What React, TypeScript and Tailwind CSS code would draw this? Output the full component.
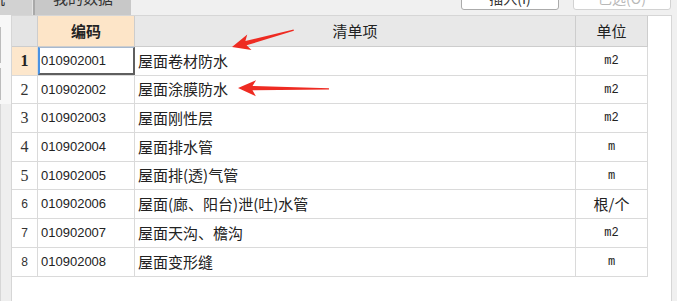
import React from "react";

type Row = {
  no: string;
  code: string;
  name: string;
  unit: string;
  h: string;
  noFont: string;
  unitFont: string;
};

const rows: Row[] = [
  { no: "1", code: "010902001", name: "屋面卷材防水", unit: "m2", h: "h-[29px]", noFont: "font-['Liberation_Serif',serif] text-[16px] font-bold", unitFont: "font-['Liberation_Mono',monospace] text-[12px]" },
  { no: "2", code: "010902002", name: "屋面涂膜防水", unit: "m2", h: "h-[28px]", noFont: "font-['Liberation_Serif',serif] text-[16px]", unitFont: "font-['Liberation_Mono',monospace] text-[12px]" },
  { no: "3", code: "010902003", name: "屋面刚性层", unit: "m2", h: "h-[29px]", noFont: "font-['Liberation_Serif',serif] text-[16px]", unitFont: "font-['Liberation_Mono',monospace] text-[12px]" },
  { no: "4", code: "010902004", name: "屋面排水管", unit: "m", h: "h-[29px]", noFont: "font-['Liberation_Serif',serif] text-[16px]", unitFont: "font-['Liberation_Mono',monospace] text-[12px]" },
  { no: "5", code: "010902005", name: "屋面排(透)气管", unit: "m", h: "h-[28px]", noFont: "font-['Liberation_Serif',serif] text-[16px]", unitFont: "font-['Liberation_Mono',monospace] text-[12px]" },
  { no: "6", code: "010902006", name: "屋面(廊、阳台)泄(吐)水管", unit: "根/个", h: "h-[29px]", noFont: "font-['Liberation_Sans',sans-serif] text-[12px]", unitFont: "font-['Noto_Sans_CJK_SC',sans-serif] text-[15px]" },
  { no: "7", code: "010902007", name: "屋面天沟、檐沟", unit: "m2", h: "h-[29px]", noFont: "font-['Liberation_Sans',sans-serif] text-[12px]", unitFont: "font-['Liberation_Mono',monospace] text-[12px]" },
  { no: "8", code: "010902008", name: "屋面变形缝", unit: "m", h: "h-[29px]", noFont: "font-['Liberation_Sans',sans-serif] text-[12px]", unitFont: "font-['Liberation_Mono',monospace] text-[12px]" },
];

// red callout arrow: tip at (x, y), tail runs `len` px along `angle`
const Arrow = ({ x, y, len, angle }: { x: number; y: number; len: number; angle: number }) => {
  const pts = `0,0 18,-8 14.5,-2.2 ${len},-0.6 ${len},0.6 14.5,2.2 18,8`;
  return <polygon points={pts} transform={`translate(${x} ${y}) rotate(${angle})`} fill="#ee2b22" />;
};

const ToolButton = ({ label, disabled }: { label: string; disabled?: boolean }) => {
  return (
    <div className="w-[98px] h-[10px] overflow-hidden">
      <div
        className={
          disabled
            ? "h-[24px] -mt-[14px] flex items-center justify-center rounded-[3px] border border-[#d2d2d2] bg-white text-[14px] text-[#b8b8b8]"
            : "h-[24px] -mt-[14px] flex items-center justify-center rounded-[3px] border border-[#ababab] bg-white text-[14px] text-[#333]"
        }
      >
        {label}
      </div>
    </div>
  );
};

const App = () => {
  return (
    <div className="relative w-[677px] h-[301px] overflow-hidden bg-[#f0f0f0] text-[#222] font-['Noto_Sans_CJK_SC',sans-serif]">
      {/* tabs + toolbar */}
      <div className="flex h-[15px]">
        <div className="w-[32px] h-full bg-[#d2d2d2] overflow-hidden">
          <span className="block -ml-[10px] -mt-[10px] text-[15px] leading-[16px] text-[#333]">机</span>
        </div>
        <div className="w-[1px] h-full bg-[#e4e4e4]" />
        <div className="w-[2px] h-full bg-[#a9a9a9]" />
        <div className="w-[96px] h-full bg-[#c8c8c8] overflow-hidden">
          <span className="block -mt-[10px] text-center text-[15px] leading-[16px] text-[#333]">我的数据</span>
        </div>
        <div className="w-[330px]" />
        <ToolButton label="插入(I)" />
        <div className="w-[14px]" />
        <ToolButton label="已选(O)" disabled />
      </div>

      <div className="flex h-[286px]">
        {/* edge of the neighbouring panel */}
        <div className="w-[11px] h-full bg-[#f7f7f7] flex flex-col">
          <div className="mt-[12px] h-[36px] border-l border-[#bcbcbc]" />
          <div className="mt-[5px] h-[32px] border-l border-[#bcbcbc]" />
          <div className="mt-[4px] flex-1 border-l border-[#d6d6d6] bg-[#eeeeee]" />
        </div>

        <div className="w-[661px] h-full bg-white border-t border-l border-r border-[#d6d6d6]">
          <div className="w-[636px]">
            {/* header */}
            <div className="flex h-[31px] border-b border-[#cdcdcd] text-[15px]">
              <div className="w-[26px] h-full bg-[#e4e4e4] border-r border-[#cdcdcd]" />
              <div className="w-[97px] h-full bg-[#fde5c8] border-r border-[#cdcdcd] flex items-center justify-center font-bold">
                编码
              </div>
              <div className="w-[441px] h-full bg-[#e8e8e8] border-r border-[#cdcdcd] flex items-center justify-center">
                清单项
              </div>
              <div className="w-[72px] h-full bg-[#e8e8e8] border-r border-[#cdcdcd] flex items-center justify-center">
                单位
              </div>
            </div>

            {rows.map((r, i) => (
              <div key={r.code} className={`flex border-b border-[#dadada] ${r.h}`}>
                <div
                  className={
                    i === 0
                      ? `w-[26px] h-full bg-[#fde7cc] border-r border-[#dadada] flex items-center justify-center text-[#222] ${r.noFont}`
                      : `w-[26px] h-full border-r border-[#dadada] flex items-center justify-center text-[#333] ${r.noFont}`
                  }
                >
                  {r.no}
                </div>
                <div
                  className={
                    i === 0
                      ? "w-[97px] h-full flex items-center pl-[1px] border-l-2 border-l-[#4a93e4] border-t border-t-[#a7b9cf] border-r-2 border-r-[#5f5f5f] border-b-2 border-b-[#5f5f5f] font-['Liberation_Sans',sans-serif] text-[13px]"
                      : "w-[97px] h-full flex items-center pl-[3px] border-r border-[#dadada] font-['Liberation_Sans',sans-serif] text-[13px]"
                  }
                >
                  {r.code}
                </div>
                <div className="w-[441px] h-full flex items-center pl-[3px] border-r border-[#dadada] text-[15px]">
                  {r.name}
                </div>
                <div className={`w-[72px] h-full flex items-center justify-center border-r border-[#dadada] ${r.unitFont}`}>
                  {r.unit}
                </div>
              </div>
            ))}
          </div>
        </div>

        <div className="w-[5px] h-full" />
      </div>

      {/* callout arrows */}
      <svg className="absolute left-0 top-0 pointer-events-none" width={677} height={301}>
        <Arrow x={232} y={47} len={64} angle={-15.3} />
        <Arrow x={238} y={88} len={91} angle={0.6} />
      </svg>
    </div>
  );
};

export default App;
